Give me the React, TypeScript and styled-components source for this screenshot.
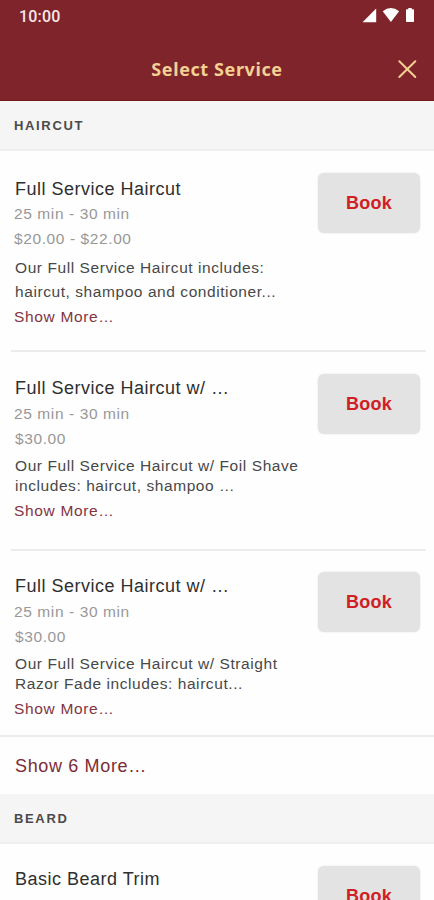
import React from "react";
import styled, { createGlobalStyle } from "styled-components";

const GlobalStyle = createGlobalStyle`
  * { box-sizing: border-box; }
  html, body { margin: 0; padding: 0; background: #fff; }
  body { font-family: "Liberation Sans", Arial, sans-serif; overflow: hidden; }
`;

const Screen = styled.div`
  width: 434px;
  height: 900px;
  overflow: hidden;
  display: flex;
  flex-direction: column;
  background: #fefefe;
`;

const Header = styled.header`
  flex: none;
  height: 101px;
  background: #7f242a;
  border-bottom: 1px solid #74191f;
`;

const StatusBar = styled.div`
  height: 34px;
  padding: 0 18px 0 19px;
  display: flex;
  align-items: center;
  justify-content: space-between;
`;

const Clock = styled.span`
  font: 500 16px/34px Roboto, sans-serif;
  letter-spacing: 0.2px;
  color: #f7e6e8;
`;

const StatusIcons = styled.svg`
  display: block;
  width: 54px;
  height: 16px;
  margin-bottom: 4px;
`;

const TitleBar = styled.div`
  height: 70px;
  padding-right: 17px;
  display: grid;
  grid-template-columns: 37px 1fr 20px;
  align-items: center;
`;

const Title = styled.h1`
  grid-column: 2;
  margin: 0;
  text-align: center;
  font: 700 18px/26px "Noto Sans", sans-serif;
  letter-spacing: 0.6px;
  color: #f3d193;
`;

const CloseButton = styled.button`
  border: 0;
  padding: 0;
  background: none;
  width: 20px;
  height: 20px;
  svg { display: block; }
`;

const SectionHeader = styled.h2<{ $height: number }>`
  flex: none;
  height: ${(p) => p.$height}px;
  margin: 0;
  padding-left: 14px;
  background: #f5f5f5;
  border-bottom: 2px solid #eeeeee;
  font-size: 13px;
  line-height: ${(p) => p.$height - 1}px;
  letter-spacing: 1.65px;
  color: #4a4a4a;
`;

const ServiceRow = styled.article<{ $height: number; $top: number }>`
  flex: none;
  height: ${(p) => p.$height}px;
  padding: ${(p) => p.$top}px 14px 0 14px;
  display: flex;
  justify-content: space-between;
  align-items: flex-start;
`;

const Details = styled.div<{ $gap: number }>`
  width: 295px;
  padding-top: ${(p) => p.$gap}px;
  white-space: nowrap;
`;

const ServiceName = styled.h3<{ $after: number }>`
  margin: 0 0 ${(p) => p.$after}px;
  padding-left: 1px;
  font-size: 18px;
  line-height: 24px;
  font-weight: 400;
  letter-spacing: 0.5px;
  color: #2f2f2f;
`;

const Meta = styled.div<{ $inset?: boolean }>`
  padding-left: ${(p) => (p.$inset ? 1 : 0)}px;
  font-size: 15.5px;
  line-height: 25px;
  letter-spacing: 0.6px;
  color: #989898;
`;

const Description = styled.p<{ $line: number }>`
  margin: 5px 0 ${(p) => (p.$line > 20 ? 0.5 : 2.5)}px 1px;
  font-size: 15.5px;
  line-height: ${(p) => p.$line}px;
  letter-spacing: 0.57px;
  color: #484848;
`;

const MoreLink = styled.a`
  display: block;
  font-size: 15.5px;
  line-height: 25px;
  letter-spacing: 0.66px;
  color: #833443;
`;

const BookButton = styled.button`
  flex: none;
  width: 102px;
  height: 60px;
  border: 0;
  padding: 0;
  border-radius: 6px;
  background: #e3e3e3;
  box-shadow: 0 0 2px rgba(0, 0, 0, 0.12);
  font: 700 18px/60px "Liberation Sans", Arial, sans-serif;
  letter-spacing: 0.3px;
  color: #cf2023;
`;

const Divider = styled.hr<{ $full?: boolean }>`
  flex: none;
  height: 2px;
  width: auto;
  border: 0;
  margin: ${(p) => (p.$full ? "0" : "0 8px 0 11px")};
  background: #ebebeb;
`;

const ShowAll = styled.a`
  flex: none;
  display: block;
  height: 57px;
  padding-left: 15px;
  font-size: 18px;
  line-height: 58px;
  letter-spacing: 0.65px;
  color: #7c2c36;
`;

type Service = {
  name: string;
  time?: string;
  price?: string;
  lines?: string[];
  line?: number;
  height: number;
  top: number;
  gap: number;
  after: number;
};

const haircuts: Service[] = [
  {
    name: "Full Service Haircut",
    time: "25 min - 30 min",
    price: "$20.00 - $22.00",
    lines: ["Our Full Service Haircut includes:", "haircut, shampoo and conditioner..."],
    line: 23.5, height: 199, top: 22, gap: 4, after: 0,
  },
  {
    name: "Full Service Haircut w/ …",
    time: "25 min - 30 min",
    price: "$30.00",
    lines: ["Our Full Service Haircut w/ Foil Shave", "includes: haircut, shampoo …"],
    line: 19.5, height: 197, top: 22, gap: 2, after: 1,
  },
  {
    name: "Full Service Haircut w/ …",
    time: "25 min - 30 min",
    price: "$30.00",
    lines: ["Our Full Service Haircut w/ Straight", "Razor Fade includes: haircut..."],
    line: 19.5, height: 184, top: 21, gap: 2, after: 1,
  },
];

const beard: Service = { name: "Basic Beard Trim", height: 100, top: 22, gap: 1, after: 2 };

function ServiceItem({ service: s }: { service: Service }) {
  return (
    <ServiceRow $height={s.height} $top={s.top}>
      <Details $gap={s.gap}>
        <ServiceName $after={s.after}>{s.name}</ServiceName>
        {s.time && <Meta>{s.time}</Meta>}
        {s.price && <Meta $inset={s.price.length < 8}>{s.price}</Meta>}
        {s.lines && (
          <>
            <Description $line={s.line ?? 20}>
              {s.lines[0]}
              <br />
              {s.lines[1]}
            </Description>
            <MoreLink>Show More…</MoreLink>
          </>
        )}
      </Details>
      <BookButton>Book</BookButton>
    </ServiceRow>
  );
}

export default function App() {
  return (
    <Screen>
      <GlobalStyle />
      <Header>
        <StatusBar>
          <Clock>10:00</Clock>
          <StatusIcons viewBox="0 0 54 16" fill="#fff">
            <path d="M0.5 15.3 14.2 1.5v13.8Z" />
            <path d="M20.7 4.2Q28.9-2.2 37.1 4.2L28.9 15Z" />
            <path d="M44.8 2.2h1.5V.9h3.4v1.3h1.5q.8 0 .8.8v11.2q0 .8-.8.8h-6.4q-.8 0-.8-.8V3q0-.8.8-.8Z" />
          </StatusIcons>
        </StatusBar>
        <TitleBar>
          <Title>Select Service</Title>
          <CloseButton aria-label="Close">
            <svg width="20" height="20" viewBox="0 0 20 20" stroke="#f3d193" strokeWidth="2" strokeLinecap="round">
              <path d="M2.3 2.2 18.3 18M18.3 2.2 2.3 18" />
            </svg>
          </CloseButton>
        </TitleBar>
      </Header>
      <SectionHeader $height={50}>HAIRCUT</SectionHeader>
      {haircuts.map((s, i) => (
        <React.Fragment key={i}>
          <ServiceItem service={s} />
          <Divider $full={i === haircuts.length - 1} />
        </React.Fragment>
      ))}
      <ShowAll>Show 6 More…</ShowAll>
      <SectionHeader $height={50}>BEARD</SectionHeader>
      <ServiceItem service={beard} />
    </Screen>
  );
}
